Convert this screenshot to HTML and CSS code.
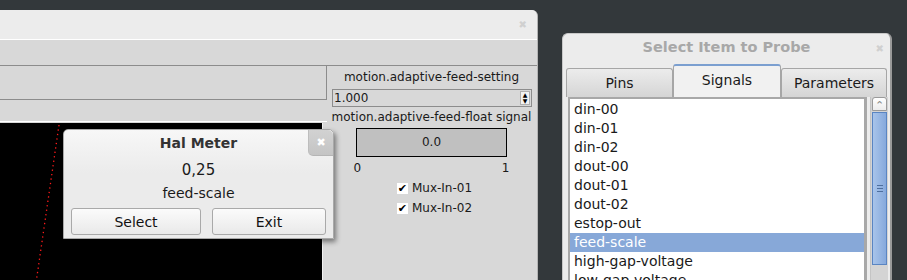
FILE: index.html
```html
<!DOCTYPE html>
<html lang="en">
<head>
  <meta charset="UTF-8">
  <title>Hal Meter</title>
  <link rel="stylesheet" href="styles.css">
</head>
<body>
  <div class="main-win">
    <div class="main-title"><span class="close-x faint">&#x2716;</span></div>
    <div class="toolbar"></div>
    <div class="main-content">
      <div class="left-col">
        <div class="top-box"></div>
        <div class="strip"></div>
        <div class="canvas">
          <svg width="322" height="160" class="plot">
            <line x1="59" y1="2" x2="36" y2="160" stroke="#ff1a1a" stroke-width="1.3" stroke-dasharray="1.3 3.2"/>
          </svg>
        </div>
      </div>
      <div class="side-panel">
        <div class="side-label">motion.adaptive-feed-setting</div>
        <div class="spinbox">
          <span>1.000</span>
          <span class="spin-arrows"><i>&#9650;</i><i>&#9660;</i></span>
        </div>
        <div class="side-label second">motion.adaptive-feed-float signal</div>
        <div class="bar">0.0</div>
        <div class="scale"><span>0</span><span>1</span></div>
        <label class="check"><span class="box">&#10004;</span>Mux-In-01</label>
        <label class="check"><span class="box">&#10004;</span>Mux-In-02</label>
      </div>
    </div>
  </div>

  <div class="meter">
    <div class="meter-title">Hal Meter</div>
    <div class="meter-close">&#x2716;</div>
    <div class="meter-value">0,25</div>
    <div class="meter-name">feed-scale</div>
    <div class="meter-buttons">
      <button class="btn btn-select">Select</button>
      <button class="btn btn-exit">Exit</button>
    </div>
  </div>

  <div class="probe">
    <div class="probe-title">Select Item to Probe <span class="close-x">&#x2716;</span></div>
    <div class="tabs">
      <div class="tab tab-pins">Pins</div>
      <div class="tab tab-signals active">Signals</div>
      <div class="tab tab-params">Parameters</div>
    </div>
    <div class="probe-body">
      <ul class="list">
        <li>din-00</li>
        <li>din-01</li>
        <li>din-02</li>
        <li>dout-00</li>
        <li>dout-01</li>
        <li>dout-02</li>
        <li>estop-out</li>
        <li class="selected">feed-scale</li>
        <li>high-gap-voltage</li>
        <li>low-gap-voltage</li>
      </ul>
      <div class="scrollbar">
        <div class="scroll-up">&#8963;</div>
        <div class="thumb"><span class="grip"></span></div>
        <div class="trough"></div>
      </div>
    </div>
  </div>
</body>
</html>
```

FILE: styles.css
```css
body {
  margin: 0;
  width: 907px;
  height: 280px;
  overflow: hidden;
  position: relative;
  background-color: #33383b;
  font-family: 'DejaVu Sans', sans-serif;
  color: #1a1a1a;
}

/* main window */

.main-win {
  position: absolute;
  left: 0;
  top: 10px;
  width: 537px;
  height: 270px;
  background-color: #d8d8d8;
  border-top-right-radius: 6px;
  border-right: 1px solid #b4b4b4;
  overflow: hidden;
}

.main-title {
  height: 29px;
  background-color: #ececec;
  border-bottom: 1px solid #ffffff;
  position: relative;
}

.close-x {
  position: absolute;
  right: 10px;
  top: 8px;
  font-size: 10px;
  color: #b8b8b8;
}

.close-x.faint {
  color: #d0d0d0;
  top: 9px;
}

.toolbar {
  height: 25px;
  background-color: #d8d8d8;
  border-bottom: 1px solid #8c8c8c;
}

.main-content {
  display: flex;
}

.left-col {
  width: 327px;
}

.top-box {
  height: 33px;
  border-bottom: 1px solid #8c8c8c;
  border-right: 1px solid #8c8c8c;
}

.strip {
  height: 21px;
  border-bottom: 1px solid #ffffff;
}

.canvas {
  margin-top: 1px;
  width: 322px;
  height: 160px;
  background-color: #000000;
  border-right: 1px solid #f0f0f0;
}

.plot {
  display: block;
}

.side-panel {
  width: 209px;
  display: flex;
  flex-direction: column;
  align-items: center;
  font-size: 12px;
}

.side-label {
  margin-top: 4px;
  line-height: 14px;
  white-space: nowrap;
}

.side-label.second {
  margin-top: 3px;
}

.spinbox {
  margin-top: 5px;
  align-self: flex-start;
  margin-left: 5px;
  width: 197px;
  height: 16px;
  border: 1px solid #8c8c8c;
  display: flex;
  justify-content: space-between;
  align-items: center;
  padding-left: 1px;
  font-size: 12px;
}

.spin-arrows {
  display: flex;
  flex-direction: column;
  margin-right: 1px;
  width: 10px;
  height: 14px;
  background-color: #f2f2f2;
  border: 1px solid #b0b0b0;
  box-sizing: border-box;
}

.spin-arrows i {
  font-style: normal;
  font-size: 6px;
  line-height: 6px;
  text-align: center;
  color: #000;
}

.bar {
  margin-top: 4px;
  width: 149px;
  height: 27px;
  border: 1px solid #000000;
  background-color: #c0c0c0;
  text-align: center;
  line-height: 26px;
  font-size: 12px;
}

.scale {
  width: 156px;
  display: flex;
  justify-content: space-between;
  line-height: 14px;
  margin-top: 4px;
  font-size: 12px;
}

.check {
  margin-top: 6px;
  display: flex;
  align-items: center;
  line-height: 14px;
  margin-left: 6px;
}

.check + .check {
  margin-top: 6px;
}

.check .box {
  width: 11px;
  height: 11px;
  background-color: #ffffff;
  margin-right: 4px;
  font-size: 11px;
  font-weight: bold;
  line-height: 11px;
  text-align: center;
  color: #000;
}

/* hal meter dialog */

.meter {
  position: absolute;
  left: 63px;
  top: 129px;
  width: 269px;
  height: 108px;
  border: 1px solid #a8a8a8;
  border-radius: 5px 5px 0 0;
  background: linear-gradient(#f7f7f7, #ebebeb 40%, #ebebeb);
  box-shadow: 2px 3px 5px rgba(0, 0, 0, 0.45);
  text-align: center;
}

.meter-title {
  height: 26px;
  line-height: 26px;
  font-size: 14px;
  font-weight: bold;
  color: #333;
}

.meter-close {
  position: absolute;
  right: 0;
  top: 0;
  width: 24px;
  height: 25px;
  line-height: 25px;
  background: linear-gradient(#d2d2d2, #c4c4c4);
  border-left: 1px solid #bdbdbd;
  border-bottom: 1px solid #b5b5b5;
  border-radius: 0 5px 0 5px;
  color: #ffffff;
  font-size: 11px;
}

.meter-value {
  margin-top: 5px;
  font-size: 15px;
  line-height: 18px;
}

.meter-name {
  margin-top: 5px;
  font-size: 14px;
  line-height: 18px;
}

.meter-buttons {
  margin-top: 6px;
  display: flex;
  padding-left: 7px;
  gap: 11px;
}

.btn {
  height: 27px;
  border: 1px solid #a9a9a9;
  border-radius: 3px;
  background: linear-gradient(#fbfbfb, #e9e9e9);
  font-family: 'DejaVu Sans', sans-serif;
  font-size: 14px;
  color: #111;
  padding: 0;
}

.btn-select {
  width: 130px;
}

.btn-exit {
  width: 114px;
}

/* probe dialog */

.probe {
  position: absolute;
  left: 562px;
  top: 33px;
  width: 327px;
  height: 260px;
  background-color: #ececec;
  border: 1px solid #c8c8c8;
  border-right: 2px solid #9a9a9a;
  border-radius: 6px 6px 0 0;
}

.probe-title {
  height: 28px;
  line-height: 27px;
  text-align: center;
  font-weight: bold;
  font-size: 14.5px;
  color: #a8a8a8;
  position: relative;
}

.probe-title .close-x {
  right: 6px;
  top: 1px;
  font-size: 10px;
  color: #d0d0d0;
}

.tabs {
  display: flex;
  align-items: flex-end;
  height: 35px;
  padding-left: 3px;
}

.tab {
  height: 29px;
  line-height: 29px;
  text-align: center;
  font-size: 14px;
  border: 1px solid #a6a6a6;
  border-bottom: none;
  border-radius: 3px 3px 0 0;
  background: linear-gradient(#ececec, #d5d5d5);
  box-sizing: border-box;
}

.tab-pins {
  width: 107px;
}

.tab-signals {
  width: 108px;
}

.tab-params {
  width: 106px;
}

.tab.active {
  height: 33px;
  line-height: 28px;
  background: #f1f1f1;
  border-top: 2px solid #7b9fd0;
}

.probe-body {
  display: flex;
  padding-left: 5px;
}

.list {
  list-style: none;
  margin: 0;
  padding: 1px 0 0 0;
  width: 294px;
  height: 190px;
  background-color: #ffffff;
  border: 2px solid #a8a8a8;
  border-right-width: 3px;
  font-size: 14px;
}

.list li {
  height: 19px;
  line-height: 19px;
  padding-left: 4px;
  white-space: nowrap;
}

.list li.selected {
  background-color: #87a8d8;
  color: #ffffff;
}

.scrollbar {
  margin-left: 3px;
  width: 17px;
  display: flex;
  flex-direction: column;
  background-color: #d4d4d4;
  border-left: 1px solid #c4c4c4;
}

.scroll-up {
  height: 14px;
  margin: 0 1px;
  border: 1px solid #9a9a9a;
  border-radius: 3px 3px 0 0;
  background: linear-gradient(#ffffff, #ececec);
  font-size: 11px;
  line-height: 16px;
  text-align: center;
  color: #888;
  box-sizing: border-box;
}

.thumb {
  height: 153px;
  margin: 1px 1px 0 1px;
  border: 1px solid #5a85c2;
  background: linear-gradient(to right, #a8c4ea, #86a9dc);
  display: flex;
  align-items: center;
  justify-content: center;
  box-sizing: border-box;
}

.grip {
  width: 6px;
  height: 5px;
  border-top: 1px solid #4e6f9e;
  border-bottom: 1px solid #4e6f9e;
  position: relative;
}

.grip::after {
  content: '';
  position: absolute;
  left: 0;
  right: 0;
  top: 2px;
  border-top: 1px solid #4e6f9e;
}

.trough {
  flex: 1;
}
```
